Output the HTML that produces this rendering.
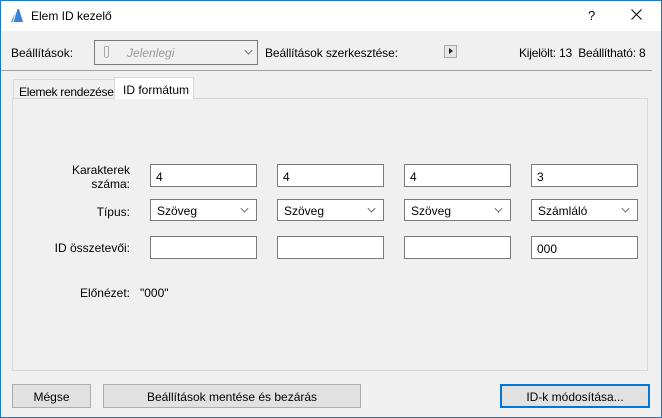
<!DOCTYPE html>
<html><head><meta charset="utf-8"><style>
*{box-sizing:border-box;margin:0;padding:0}
body{width:662px;height:418px;overflow:hidden;background:#f0f0f0;font-family:"Liberation Sans",Tahoma,sans-serif;font-size:12px;color:#000;position:relative}
.win{position:absolute;left:0;top:0;width:662px;height:418px;border:1px solid #1979ca}
.a{position:absolute;white-space:nowrap}
.title{left:1px;top:1px;width:660px;height:30px;background:#fff}
.box{position:absolute;background:#fff;border:1px solid #7a7a7a;height:23px;padding:5px 0 0 5px;font-size:12px}
.sel{position:absolute;background:#fff;border:1px solid #7a7a7a;height:22px;padding:4px 0 0 6px}
.chev{position:absolute;right:8px;top:5px;width:7px;height:7px;border-right:1px solid #555;border-bottom:1px solid #555;transform:rotate(45deg) scale(.8)}
.lbl{position:absolute;text-align:right;width:130px;left:0}
.btn{position:absolute;top:384px;height:24px;background:#e1e1e1;border:1px solid #adadad;text-align:center;padding-top:5px;white-space:nowrap}
</style></head><body>
<div class="win"></div>
<div class="a title"></div>
<svg class="a" style="left:10px;top:8px" width="14" height="15" viewBox="0 0 14 15"><path d="M1 14 L7 1 L9 1 L13 14 Z" fill="#3b83d6"/><path d="M7 1 L3 14" stroke="#fff" stroke-width="1"/></svg>
<div class="a" style="left:31px;top:9px;font-size:12px">Elem ID kezelő</div>
<div class="a" style="left:588px;top:8px;font-size:13px">?</div>
<svg class="a" style="left:631px;top:9px" width="11" height="11" viewBox="0 0 11 11"><path d="M0.5 0.5 L10.5 10.5 M10.5 0.5 L0.5 10.5" stroke="#000" stroke-width="1"/></svg>

<div class="a" style="left:11px;top:46px">Beállítások:</div>
<div class="a" style="left:94px;top:40px;width:164px;height:25px;border:1px solid #7a7a7a"></div>
<div class="a" style="left:104px;top:46px;width:5px;height:12px;border:1px solid #aaa;border-radius:2px 2px 3px 3px"></div>
<div class="a" style="left:127px;top:46px;color:#999;font-style:italic">Jelenlegi</div>
<div class="a" style="left:245px;top:47px;width:7px;height:7px;border-right:1px solid #555;border-bottom:1px solid #555;transform:rotate(45deg) scale(.8)"></div>
<div class="a" style="left:265px;top:46px;letter-spacing:-0.1px">Beállítások szerkesztése:</div>
<div class="a" style="left:444px;top:45px;width:13px;height:13px;border:1px solid #aaa;background:#e6e6e6"></div>
<div class="a" style="left:449px;top:48px;width:0;height:0;border-left:4px solid #222;border-top:3.5px solid transparent;border-bottom:3.5px solid transparent"></div>
<div class="a" style="left:519px;top:46px;letter-spacing:-0.2px">Kijelölt: 13&nbsp;&nbsp;Beállítható: 8</div>
<div class="a" style="left:1px;top:70px;width:651px;height:1px;background:#a0a0a0"></div>

<div class="a" style="left:12px;top:98px;width:636px;height:273px;border:1px solid #d9d9d9;background:#f0f0f0"></div>
<div class="a" style="left:13px;top:79px;width:103px;height:20px;border:1px solid #d9d9d9;border-bottom:none;padding:5px 0 0 5px;letter-spacing:-0.3px">Elemek rendezése</div>
<div class="a" style="left:114px;top:77px;width:80px;height:22px;border:1px solid #d9d9d9;border-bottom:none;background:#fff;padding:5px 0 0 8px">ID formátum</div>

<div class="lbl" style="top:163px">Karakterek<br>száma:</div>
<div class="lbl" style="top:205px">Típus:</div>
<div class="lbl" style="top:241px">ID összetevői:</div>
<div class="lbl" style="top:286px">Előnézet:</div>
<div class="a" style="left:140px;top:286px">"000"</div>

<div class="box" style="left:150px;top:164px;width:107px">4</div>
<div class="box" style="left:277px;top:164px;width:107px">4</div>
<div class="box" style="left:404px;top:164px;width:107px">4</div>
<div class="box" style="left:531px;top:164px;width:107px">3</div>

<div class="sel" style="left:150px;top:199px;width:107px">Szöveg<div class="chev"></div></div>
<div class="sel" style="left:277px;top:199px;width:107px">Szöveg<div class="chev"></div></div>
<div class="sel" style="left:404px;top:199px;width:107px">Szöveg<div class="chev"></div></div>
<div class="sel" style="left:531px;top:199px;width:107px">Számláló<div class="chev"></div></div>

<div class="box" style="left:150px;top:236px;width:107px"></div>
<div class="box" style="left:277px;top:236px;width:107px"></div>
<div class="box" style="left:404px;top:236px;width:107px"></div>
<div class="box" style="left:531px;top:236px;width:107px">000</div>

<div class="btn" style="left:12px;width:79px">Mégse</div>
<div class="btn" style="left:103px;width:258px">Beállítások mentése és bezárás</div>
<div class="btn" style="left:500px;width:150px;border:2px solid #0078d7;padding-top:4px">ID-k módosítása...</div>
</body></html>
